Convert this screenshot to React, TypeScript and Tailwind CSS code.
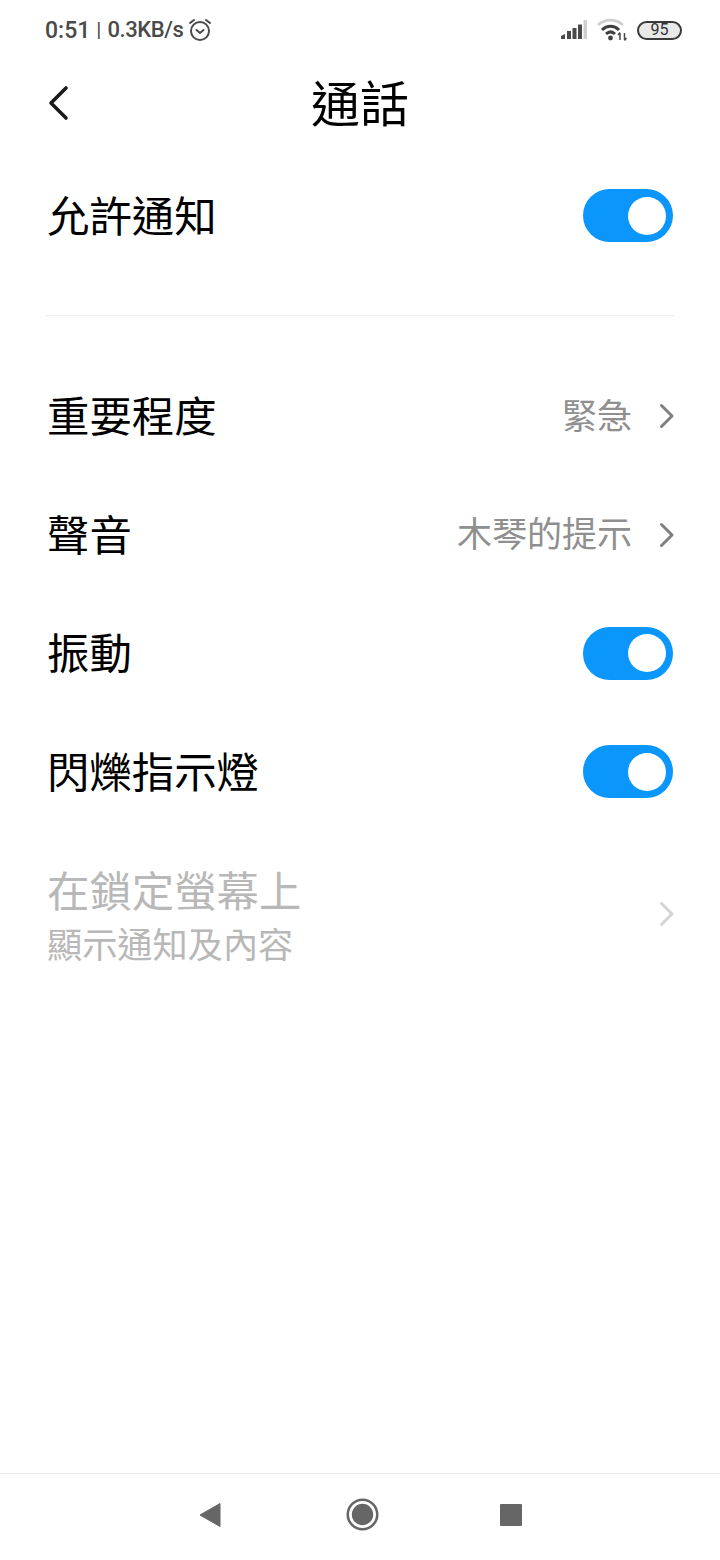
import { ReactNode } from 'react'

const cjk = "font-['Roboto','Noto_Sans_CJK_TC',sans-serif]"

function Toggle() {
  return (
    <div className="flex h-[53px] w-[90px] items-center justify-end rounded-full bg-[#0a96fb] pr-[7px]">
      <div className="h-[38px] w-[38px] rounded-full bg-white" />
    </div>
  )
}

function Chevron({ faded }: { faded?: boolean }) {
  return (
    <svg width="16" height="26" viewBox="0 0 16 26" fill="none" className="ml-[27px] mr-[-2px]">
      <path
        d="M2.5 2.5 L13 13 L2.5 23.5"
        stroke={faded ? '#d4d4d4' : '#808080'}
        strokeWidth="3"
        strokeLinecap="round"
        strokeLinejoin="round"
      />
    </svg>
  )
}

function Label({ children }: { children: ReactNode }) {
  return <span className="pt-[4px] text-[42.4px] leading-none text-black">{children}</span>
}

function Row({ label, value, toggle }: { label: string; value?: string; toggle?: boolean }) {
  return (
    <div className="flex h-[118.5px] items-center justify-between">
      <Label>{label}</Label>
      {toggle ? (
        <Toggle />
      ) : (
        <div className="flex items-center">
          <span className="pt-[2px] text-[35px] leading-none text-[#8f8f8f]">{value}</span>
          <Chevron />
        </div>
      )}
    </div>
  )
}

function StatusBar() {
  return (
    <div className="flex h-[60px] items-center justify-between pl-[45px] pr-[38px] text-[#4a4a4a]">
      <div className="flex items-center">
        <span className="text-[23px] font-medium leading-none">0:51</span>
        <span className="ml-[6px] text-[21px] leading-none">|</span>
        <span className="ml-[6px] text-[22px] font-medium leading-none tracking-[-0.4px]">0.3KB/s</span>
        <svg width="24" height="24" viewBox="0 0 24 24" fill="none" stroke="#4a4a4a" strokeWidth="2" className="ml-[5px]">
          <circle cx="12" cy="13" r="9" />
          <path d="M8.5 12l3.5 3 3.5-3" strokeLinecap="round" strokeLinejoin="round" />
          <path d="M2 5l4-3M22 5l-4-3" strokeLinecap="round" />
        </svg>
      </div>
      <div className="flex items-center">
        <svg width="27" height="20" viewBox="0 0 27 20">
          <path d="M1 19v-3l4-2v5z" fill="#4a4a4a" />
          <rect x="7" y="11" width="4" height="8" fill="#4a4a4a" />
          <rect x="12.5" y="8" width="4" height="11" fill="#4a4a4a" />
          <rect x="18" y="4.5" width="4" height="14.5" fill="#4a4a4a" />
          <rect x="23.5" y="0" width="3.5" height="19" fill="#cfcfcf" />
        </svg>
        <svg width="30" height="24" viewBox="0 0 30 24" fill="none" className="ml-[10px]">
          <path d="M1 7C8 0.5 19 0.5 26 7" stroke="#cfcfcf" strokeWidth="2.8" />
          <path d="M5 12C10 7 17 7 22 12" stroke="#3f3f3f" strokeWidth="3" />
          <path d="M9 16C12 13.2 15 13.2 18 16" stroke="#3f3f3f" strokeWidth="3" />
          <circle cx="13.5" cy="20" r="2.4" fill="#3f3f3f" />
          <path d="M23 15v7M21 17l2-2.5M27.5 15v7M29.5 20l-2 2.5" stroke="#4a4a4a" strokeWidth="1.5" />
        </svg>
        <div className="ml-[10px] flex h-[19px] w-[45px] items-center justify-center rounded-full border-2 border-[#3a3a3a] bg-[#e8e8e8] text-[16px] leading-none text-[#333]">
          95
        </div>
      </div>
    </div>
  )
}

export default function App() {
  return (
    <div className={`flex h-[1560px] w-[720px] flex-col bg-white ${cjk}`}>
      <StatusBar />

      {/* Header */}
      <div className="relative flex h-[86px] items-center justify-center">
        <svg width="24" height="36" viewBox="0 0 24 36" fill="none" className="absolute left-[47px] top-[25px]">
          <path d="M19 3 L4 18 L19 33" stroke="#1a1a1a" strokeWidth="3.6" strokeLinecap="round" strokeLinejoin="round" />
        </svg>
        <span className="pt-[4px] text-[49px] leading-none text-black">通話</span>
      </div>

      <div className="px-[47px]">
        <div className="flex h-[139px] items-center justify-between">
          <span className="pt-[6px] text-[42.4px] leading-none text-black">允許通知</span>
          <Toggle />
        </div>
      </div>

      <div className="mx-[46px] mt-[30px] h-px bg-[#ececec]" />

      <div className="mt-[41px] px-[47px]">
        <Row label="重要程度" value="緊急" />
        <Row label="聲音" value="木琴的提示" />
        <Row label="振動" toggle />
        <Row label="閃爍指示燈" toggle />

        <div className="mt-[8px] flex h-[150px] items-center justify-between">
          <div className="flex flex-col pt-[7px]">
            <span className="text-[42.4px] leading-[48px] text-[#b8b8b8]">在鎖定螢幕上</span>
            <span className="mt-[8px] text-[35.2px] leading-[42px] text-[#b8b8b8]">顯示通知及內容</span>
          </div>
          <Chevron faded />
        </div>
      </div>

      {/* Nav bar */}
      <div className="mt-auto flex h-[87px] items-center justify-between border-t border-[#e8e8e8] pb-[5px] pl-[199px] pr-[198px]">
        <svg width="22" height="26" viewBox="0 0 22 26">
          <path d="M21 1.5V24.5L1 13Z" fill="#666" stroke="#666" strokeWidth="1" strokeLinejoin="round" />
        </svg>
        <svg width="33" height="33" viewBox="0 0 34 34" fill="none" className="ml-[3px]">
          <circle cx="17" cy="17" r="15.2" stroke="#666" strokeWidth="2.6" />
          <circle cx="17" cy="17" r="11" fill="#666" />
        </svg>
        <div className="h-[22px] w-[22px] rounded-[1px] bg-[#666]" />
      </div>
    </div>
  )
}
